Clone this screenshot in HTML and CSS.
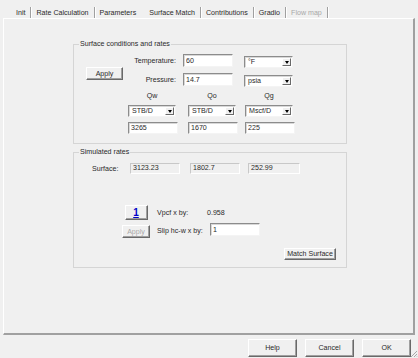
FILE: index.html
```html
<!DOCTYPE html>
<html lang="en">

<head>
    <meta charset="UTF-8">
    <title>Surface Match</title>
    <link rel="stylesheet" href="styles.css">
</head>

<body>
    <div class="window">
        <div class="tabs">
            <span class="tab">Init</span>
            <span class="tab">Rate Calculation</span>
            <span class="tab tab-plain">Parameters</span>
            <span class="tab tab-active">Surface Match</span>
            <span class="tab">Contributions</span>
            <span class="tab">Gradio</span>
            <span class="tab tab-disabled">Flow map</span>
        </div>

        <div class="panel">
            <fieldset class="group group-conditions">
                <legend>Surface conditions and rates</legend>

                <div class="cond">
                    <button class="btn apply-btn">Apply</button>
                    <div class="cond-grid">
                        <label class="cond-label">Temperature:</label>
                        <input class="field cond-field" type="text" value="60">
                        <div class="select cond-select"><span class="select-text">°F</span><span class="select-arrow"></span></div>

                        <label class="cond-label">Pressure:</label>
                        <input class="field cond-field" type="text" value="14.7">
                        <div class="select cond-select"><span class="select-text">psia</span><span class="select-arrow"></span></div>
                    </div>
                </div>

                <div class="q-grid">
                    <div class="q-col">
                        <span class="q-label">Qw</span>
                        <div class="select q-select"><span class="select-text">STB/D</span><span class="select-arrow"></span></div>
                        <input class="field q-field" type="text" value="3265">
                    </div>
                    <div class="q-col">
                        <span class="q-label">Qo</span>
                        <div class="select q-select"><span class="select-text">STB/D</span><span class="select-arrow"></span></div>
                        <input class="field q-field" type="text" value="1670">
                    </div>
                    <div class="q-col">
                        <span class="q-label">Qg</span>
                        <div class="select q-select"><span class="select-text">Mscf/D</span><span class="select-arrow"></span></div>
                        <input class="field q-field" type="text" value="225">
                    </div>
                </div>
            </fieldset>

            <fieldset class="group group-simulated">
                <legend>Simulated rates</legend>

                <div class="sim-row">
                    <span class="sim-label">Surface:</span>
                    <span class="ro ro-w">3123.23</span>
                    <span class="ro ro-o">1802.7</span>
                    <span class="ro ro-g">252.99</span>
                </div>

                <div class="factors">
                    <button class="btn num-btn">1</button>
                    <span class="factor-label">Vpcf x by:</span>
                    <span class="factor-value">0.958</span>

                    <button class="btn small-apply" disabled>Apply</button>
                    <span class="factor-label">Slip hc-w x by:</span>
                    <input class="field factor-field" type="text" value="1">
                </div>

                <div class="match-row">
                    <button class="btn match-btn">Match Surface</button>
                </div>
            </fieldset>
        </div>

        <div class="footer">
            <button class="btn footer-btn">Help</button>
            <button class="btn footer-btn">Cancel</button>
            <button class="btn footer-btn">OK</button>
        </div>

        <svg class="grip" width="8" height="8" viewBox="0 0 8 8">
            <path d="M7 1 L1 7 M7 4 L4 7 M7 6.5 L6.5 7" stroke="#a8a8a8" stroke-width="1" fill="none" />
        </svg>
    </div>
</body>

</html>
```

FILE: styles.css
```css
* {
    margin: 0;
    padding: 0;
    box-sizing: border-box;
}

body {
    font-family: 'Liberation Sans', Arial, sans-serif;
    font-size: 7.1px;
    line-height: 10px;
    color: #2a2a2a;
    background: #f0f0f0;
    width: 418px;
    height: 358px;
    overflow: hidden;
}

.window {
    position: relative;
    height: 358px;
    display: flex;
    flex-direction: column;
}

/* tab strip */
.tabs {
    height: 18px;
    display: flex;
    padding-left: 11px;
}

.tab {
    margin-top: 7px;
    height: 12px;
    line-height: 12px;
    padding: 0 5px;
    border-right: 1px solid #a0a0a0;
    box-shadow: 1px 0 #fff;
}

.tab-plain {
    border-right: none;
    box-shadow: none;
    padding-right: 7px;
}

.tab-active {
    padding-left: 6px;
}

.tab-disabled {
    color: #a8a8a8;
}

/* page */
.panel {
    flex: 1;
    margin: 0 3px;
    border-top: 1px solid #fff;
    border-left: 1px solid #fff;
    border-right: 2px solid #a0a0a0;
    border-bottom: 2px solid #a0a0a0;
    padding-left: 69px;
}

.group {
    width: 274px;
    border: 1px solid #d5d5d5;
    min-width: 0;
}

.group legend {
    margin-left: 5px;
    padding: 0 1px;
    line-height: 10px;
}

.group-conditions {
    margin-top: 20px;
    padding-bottom: 9px;
}

.group-simulated {
    margin-top: 3px;
    padding-bottom: 7px;
}

/* controls */
.btn {
    font: inherit;
    color: #2a2a2a;
    background: #f0f0f0;
    border-top: 1px solid #fff;
    border-left: 1px solid #fff;
    border-right: 1px solid #696969;
    border-bottom: 1px solid #696969;
    box-shadow: inset -1px -1px #a0a0a0;
    text-align: center;
}

.btn:disabled {
    color: #a8a8a8;
}

.field {
    font: inherit;
    color: #2a2a2a;
    background: #fff;
    border: 1px solid;
    border-color: #8c8c8c #f4f4f4 #f4f4f4 #8c8c8c;
    box-shadow: inset 1px 1px #d8d8d8;
    padding: 0 2px;
    outline: none;
}

.select {
    display: flex;
    background: #fff;
    border: 1px solid;
    border-color: #8c8c8c #f4f4f4 #f4f4f4 #8c8c8c;
    box-shadow: inset 1px 1px #d8d8d8;
    padding: 1px;
}

.select-text {
    flex: 1;
    padding-left: 2px;
    line-height: 8px;
}

.select-arrow {
    width: 9px;
    background: #f0f0f0;
    border: 1px solid;
    border-color: #fff #696969 #696969 #fff;
    display: flex;
    justify-content: center;
    align-items: center;
}

.select-arrow::after {
    content: '';
    border-left: 2.5px solid transparent;
    border-right: 2.5px solid transparent;
    border-top: 3px solid #000;
}

/* surface conditions */
.cond {
    display: flex;
    padding-top: 5px;
}

.apply-btn {
    margin: 13px 0 0 12px;
    width: 37px;
    height: 13px;
}

.cond-grid {
    display: grid;
    grid-template-columns: 60px 61px 49px;
    grid-auto-rows: 13px;
    row-gap: 6px;
    align-items: center;
}

.cond-label {
    text-align: right;
    padding-right: 7px;
}

.cond-field {
    width: 50px;
    height: 13px;
}

.cond-select {
    width: 49px;
    height: 12px;
    margin-top: 3px;
}

.q-grid {
    display: grid;
    grid-template-columns: 60px 57px 50px;
    margin: 5px 0 0 54px;
}

.q-col {
    display: flex;
    flex-direction: column;
    align-items: flex-start;
}

.q-label {
    width: 48px;
    text-align: center;
}

.q-select {
    width: 48px;
    height: 12px;
    margin-top: 4px;
}

.q-field {
    width: 50px;
    height: 12px;
    margin-top: 5px;
}

/* simulated rates */
.sim-row {
    display: flex;
    align-items: center;
    height: 11px;
    margin-top: 6px;
}

.sim-label {
    margin-left: 18px;
    width: 38px;
}

.ro {
    height: 11px;
    line-height: 9px;
    padding-left: 2px;
    background: #f0f0f0;
    border: 1px solid;
    border-color: #c8c8c8 #fff #fff #c8c8c8;
}

.ro-w {
    width: 50px;
}

.ro-o {
    width: 50px;
    margin-left: 10px;
}

.ro-g {
    width: 52px;
    margin-left: 8px;
}

.factors {
    display: grid;
    grid-template-columns: 28px 57px auto;
    grid-template-rows: 15px 15px;
    row-gap: 3px;
    margin: 31px 0 0 48px;
    align-items: center;
}

.num-btn {
    width: 23px;
    height: 15px;
    justify-self: center;
    font-size: 10px;
    font-weight: bold;
    color: #0000c8;
    text-decoration: underline;
    line-height: 12px;
}

.small-apply {
    width: 28px;
    height: 13px;
    align-self: end;
}

.factor-label {
    padding-left: 7px;
}

.factor-field {
    width: 50px;
    height: 13px;
    margin-left: 3px;
    align-self: start;
}

.match-row {
    display: flex;
    justify-content: flex-end;
    padding: 10px 10px 0 0;
}

.match-btn {
    width: 52px;
    height: 12px;
}

/* dialog buttons */
.footer {
    height: 23px;
    display: flex;
    justify-content: flex-end;
    gap: 8px;
    padding: 4px 7px 0 0;
}

.footer-btn {
    width: 49px;
    height: 18px;
}

.grip {
    position: absolute;
    right: 0;
    bottom: 0;
}
```
